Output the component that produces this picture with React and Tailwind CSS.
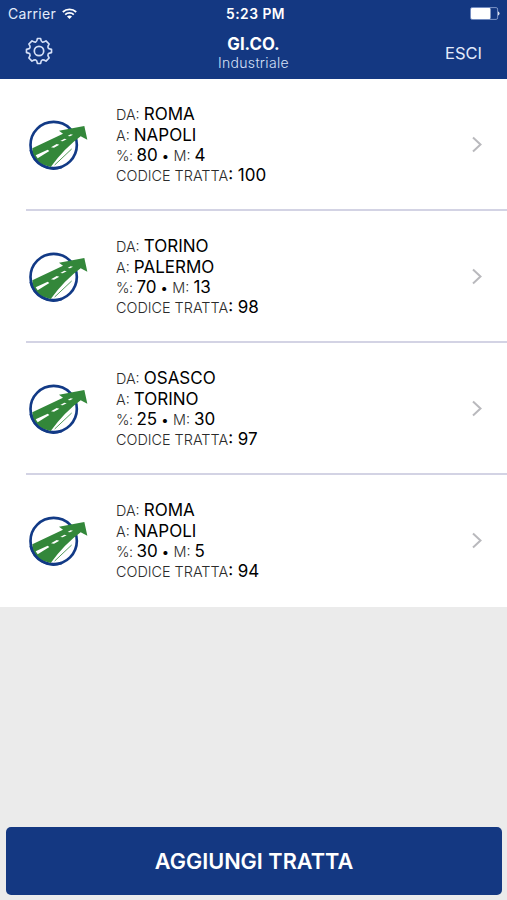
const ROUTES = [
  { from: 'ROMA', to: 'NAPOLI', percent: 80, m: 4, code: 100 },
  { from: 'TORINO', to: 'PALERMO', percent: 70, m: 13, code: 98 },
  { from: 'OSASCO', to: 'TORINO', percent: 25, m: 30, code: 97 },
  { from: 'ROMA', to: 'NAPOLI', percent: 30, m: 5, code: 94 },
];

function WifiIcon() {
  return (
    <svg width="15" height="11" viewBox="0 0 15 11" fill="none" stroke="#fff" strokeWidth="1.8">
      <path d="M0.8 4C4.6 0.4 10.4 0.4 14.2 4" />
      <path d="M3.2 6.6C5.6 4.4 9.4 4.4 11.8 6.6" />
      <path d="M5 8.5C6.4 7.2 8.6 7.2 10 8.5L7.5 11Z" fill="#fff" stroke="none" />
    </svg>
  );
}

function BatteryIcon() {
  return (
    <svg width="30" height="13" viewBox="0 0 30 13" fill="none">
      <rect x="0.6" y="0.6" width="27" height="11.8" rx="1.5" stroke="#7f96c8" />
      <rect x="1" y="1" width="19.5" height="11" rx="1" fill="#fff" />
      <path d="M28.5 4.8Q30 6.5 28.5 8.2Z" fill="#fff" stroke="#fff" strokeWidth="0.6" />
    </svg>
  );
}

function GearIcon() {
  return (
    <svg width="28" height="28" viewBox="0 0 28 28" fill="none" stroke="#d5e0f7" strokeWidth="1.7" strokeLinejoin="round">
      <path d="M12.4 1.5H15.6Q16 4.6 17.2 5Q18.4 5.6 21 3.9L24.1 7Q22.4 9.6 23 10.8Q23.4 12 26.5 12.4V15.6Q23.4 16 23 17.2Q22.4 18.4 24.1 21L21 24.1Q18.4 22.4 17.2 23Q16 23.4 15.6 26.5H12.4Q12 23.4 10.8 23Q9.6 22.4 7 24.1L3.9 21Q5.6 18.4 5 17.2Q4.6 16 1.5 15.6V12.4Q4.6 12 5 10.8Q5.6 9.6 3.9 7L7 3.9Q9.6 5.6 10.8 5Q12 4.6 12.4 1.5Z" />
      <circle cx="14" cy="14" r="4.7" />
    </svg>
  );
}

function RoadLogo() {
  return (
    <svg width="62" height="52" viewBox="36 42 186 156" fill="none">
      <circle cx="116" cy="120" r="69.5" fill="#fff" stroke="#123a86" strokeWidth="8" />
      <path d="M52 130L144 86L132 77L208 63L217 104L197 94Q150 128 107 186Q70 180 54 151Z" fill="#33873a" />
      {/* lane markings */}
      <path d="M62 151L98 134L103 138L68 160Z" fill="#fff" />
      <path d="M108 127L125 117L133 119L117 128Z" fill="#fff" />
      <path d="M136 108L148 101L155 103L143 109Z" fill="#fff" />
      <path d="M158 93L167 88L174 89L165 94Z" fill="#fff" />
      <path d="M119 180L170 132" stroke="#33873a" strokeWidth="2.5" />
      <path d="M47 135A70 70 0 0 0 140 186" stroke="#123a86" strokeWidth="8" />
    </svg>
  );
}

function RouteRow({ route, last }) {
  return (
    <li className="flex h-[132px] pl-[26px]">
      <div className={`flex flex-1 items-center border-b-2 pr-[24px] ${last ? 'border-transparent' : 'border-[#d3d3e4]'}`}>
        <div className="mt-[2px] ml-[1px] w-[89px] shrink-0">
          <RoadLogo />
        </div>
        <div className="grid flex-1 auto-rows-[20.4px] pt-[2px] text-[14.4px] leading-[20.4px] font-light text-[#2b2b2b]">
          <p>DA: <span className="text-[17px] font-normal text-black">{route.from}</span></p>
          <p>A: <span className="text-[17px] font-normal text-black">{route.to}</span></p>
          <p>
            <span className="tracking-[-0.4px]">%: </span>
            <span className="text-[17px] font-normal text-black">{route.percent}</span>
            <span className="text-[13px] font-normal tracking-[0.4px] text-black"> • </span>M:{' '}
            <span className="text-[17px] font-normal text-black">{route.m}</span>
          </p>
          <p>CODICE TRATTA<span className="text-[17px] font-normal text-black">: {route.code}</span></p>
        </div>
        <svg width="12" height="17" viewBox="0 0 12 17" fill="none" stroke="#b9b9bd" strokeWidth="2">
          <path d="M2 1.5L9.5 8.5L2 15.5" />
        </svg>
      </div>
    </li>
  );
}

export default function App() {
  return (
    <div className="flex h-[900px] w-[507px] flex-col bg-[#ebebeb] font-['Inter',sans-serif]">
      <header className="h-[79px] bg-[#143882] text-white">
        <div className="grid h-[27px] grid-cols-3 items-center pr-[7px] pl-[8px] text-[14px]">
          <div className="flex items-center gap-[6px] text-[#e3ebfb]">
            <span className="tracking-[0.3px]">Carrier</span>
            <WifiIcon />
          </div>
          <span className="pt-px pl-[3px] text-center text-[13.8px] font-semibold tracking-[0.5px]">5:23 PM</span>
          <div className="flex justify-end">
            <BatteryIcon />
          </div>
        </div>
        <div className="grid h-[52px] grid-cols-3 pr-[25px] pl-[25px]">
          <button className="mt-[10px] h-[28px] w-[28px]">
            <GearIcon />
          </button>
          <div className="pt-[8px] text-center">
            <h1 className="text-[16.8px] leading-[19px] font-bold">GI.CO.</h1>
            <p className="text-[14px] leading-[18px] font-light tracking-[0.3px] text-[#d5e0f7]">Industriale</p>
          </div>
          <button className="mt-[14px] h-[24px] text-right text-[16.5px] leading-[24px] text-[#e3ebfb]">ESCI</button>
        </div>
      </header>

      <ul className="bg-white">
        {ROUTES.map((route, index) => (
          <RouteRow key={route.code} route={route} last={index === ROUTES.length - 1} />
        ))}
      </ul>

      <div className="mt-auto pr-[5px] pb-[5px] pl-[6px]">
        <button className="h-[68px] w-full rounded-[5px] bg-[#143882] text-[21.7px] font-semibold text-white">
          AGGIUNGI TRATTA
        </button>
      </div>
    </div>
  );
}
